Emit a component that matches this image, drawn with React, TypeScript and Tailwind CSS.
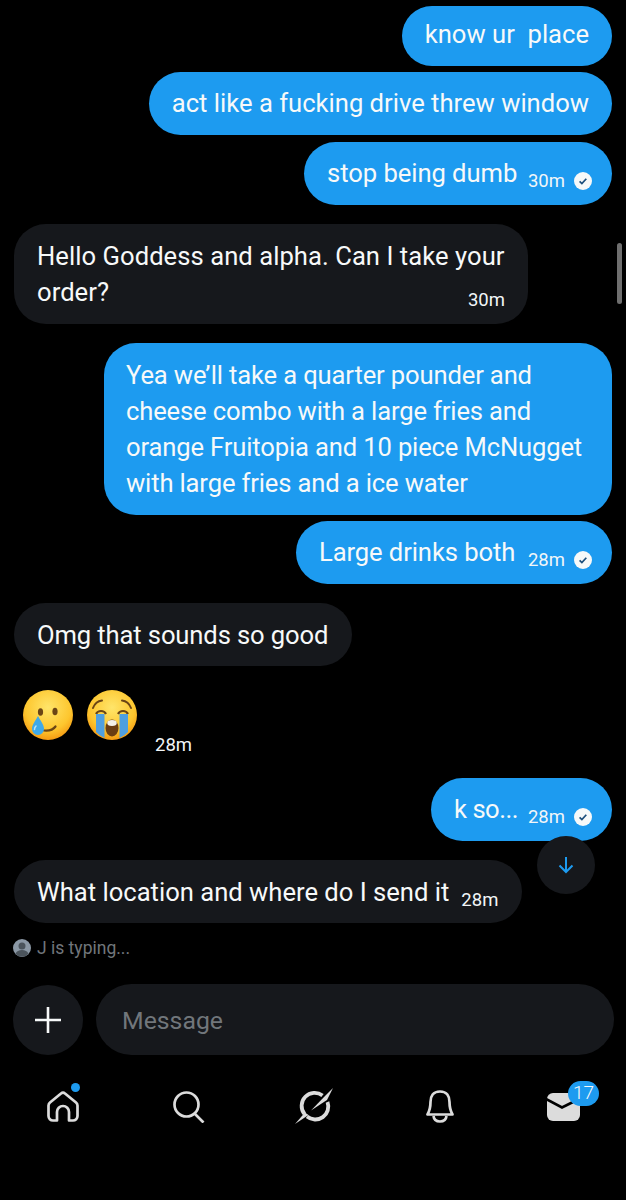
import { ReactNode } from 'react';

function Check() {
  return (
    <svg viewBox="0 0 18 18" className="ml-[9px] h-[18px] w-[18px] shrink-0">
      <circle cx="9" cy="9" r="9" fill="#f7f9f9" />
      <path d="M5.600 9.300l2.300 2.300 4.400-4.900" fill="none" stroke="#1d4f7c" strokeWidth="1.700" />
    </svg>
  );
}

function Meta({ time, check, className = '' }: { time: string; check?: boolean; className?: string }) {
  return (
    <span className={`ml-[10px] flex translate-y-[8px] items-center text-[18.5px] leading-[24px] tracking-normal text-[#f2f6f8] ${check ? '-mr-[3px]' : ''} ${className}`}>
      {time}
      {check && <Check />}
    </span>
  );
}

function Sent({ children, className }: { children: ReactNode; className: string }) {
  return (
    <div className={`self-end rounded-[32px] bg-[#1d9bf0] px-[23px] pb-[14px] pt-[13px] text-[25.6px] leading-[36px] text-[#f7f9f9] ${className}`}>
      {children}
    </div>
  );
}

function Received({ children, className }: { children: ReactNode; className: string }) {
  return (
    <div className={`self-start rounded-[32px] bg-[#16181c] px-[23px] pb-[13px] pt-[14px] text-[25.6px] leading-[36px] text-[#f7f9f9] ${className}`}>
      {children}
    </div>
  );
}

function SmileTear() {
  return (
    <svg viewBox="0 0 52 52" className="h-[52px] w-[52px]">
      <defs>
        <radialGradient id="face1" cx="50%" cy="35%" r="65%">
          <stop offset="0%" stopColor="#ffe56a" />
          <stop offset="70%" stopColor="#fdc62e" />
          <stop offset="100%" stopColor="#f59a12" />
        </radialGradient>
      </defs>
      <circle cx="26" cy="26" r="25" fill="url(#face1)" />
      <ellipse cx="18.500" cy="23" rx="2.600" ry="3.800" fill="#6b4515" />
      <ellipse cx="33" cy="22.500" rx="2.600" ry="3.800" fill="#6b4515" />
      <path d="M22 41.500c5 .5 9-.5 11.500-4" fill="none" stroke="#6b4515" strokeWidth="2.200" strokeLinecap="round" />
      <path d="M16 27c2.500 5 6 8.500 6 13a6 6 0 0 1-12 0c0-4.500 3.500-8 6-13z" fill="#3fa9e8" />
      <path d="M14 37c-1 1-1.500 2-1.500 3.500" fill="none" stroke="#b5e3fb" strokeWidth="1.500" strokeLinecap="round" />
    </svg>
  );
}

function LoudCry() {
  return (
    <svg viewBox="0 0 52 52" className="h-[52px] w-[52px]">
      <defs>
        <radialGradient id="face2" cx="50%" cy="35%" r="65%">
          <stop offset="0%" stopColor="#ffe56a" />
          <stop offset="70%" stopColor="#fdc62e" />
          <stop offset="100%" stopColor="#f59a12" />
        </radialGradient>
      </defs>
      <circle cx="26" cy="26" r="25" fill="url(#face2)" />
      <path d="M7 19c1.500-4 5-7 9-7.500" fill="none" stroke="#6b4515" strokeWidth="2" strokeLinecap="round" />
      <path d="M45 19c-1.500-4-5-7-9-7.500" fill="none" stroke="#6b4515" strokeWidth="2" strokeLinecap="round" />
      <path d="M10 25c2-4 8-4 10 0" fill="none" stroke="#6b4515" strokeWidth="2.200" />
      <path d="M32 25c2-4 8-4 10 0" fill="none" stroke="#6b4515" strokeWidth="2.200" />
      <path d="M10 25h8.500v24a25 25 0 0 1-8.500-6z" fill="#4f9fe0" />
      <path d="M33.500 25H42v18a25 25 0 0 1-8.500 6z" fill="#4f9fe0" />
      <ellipse cx="26" cy="39" rx="6.500" ry="8.500" fill="#6a3d12" />
      <ellipse cx="26" cy="34" rx="4.800" ry="3" fill="#f4f1e8" />
    </svg>
  );
}

function NavIcons() {
  return (
    <nav className="mt-[26px] flex items-start pl-[47px]">
      <div className="relative h-[41px] w-[33px]">
        <svg viewBox="0 0 32 31" className="absolute left-0 top-[10px] h-[31px] w-[32px]" fill="none" stroke="#dcdcdc" strokeWidth="2.700">
          <path d="M14 2.500a3 3 0 0 1 4 0L29 11.500a4 4 0 0 1 1.500 3V25a4.500 4.500 0 0 1-4.500 4.500H22V21a6 6 0 0 0-12 0v8.500H6A4.500 4.500 0 0 1 1.500 25V14.500a4 4 0 0 1 1.500-3z" strokeLinejoin="round" />
        </svg>
        <span className="absolute left-[24px] top-[2px] h-[9px] w-[9px] rounded-full bg-[#1d9bf0]" />
      </div>
      <svg viewBox="0 0 32 32" className="ml-[93px] mt-[10px] h-[32px] w-[32px]" fill="none" stroke="#dcdcdc" strokeWidth="2.700">
        <circle cx="13.500" cy="13.500" r="12" />
        <path d="M21.500 22.500l9 9" />
      </svg>
      <svg viewBox="0 0 39 38" className="ml-[90px] mt-[6px] h-[38px] w-[39px]" fill="#dcdcdc" stroke="none">
        <path d="M27.500 8.500A13 13 0 0 0 9.500 27" fill="none" stroke="#dcdcdc" strokeWidth="3.800" />
        <path d="M12 29.500A13 13 0 0 0 32.500 15" fill="none" stroke="#dcdcdc" strokeWidth="3.800" />
        <polygon points="38,1 32,13 16,23.500 30,9" />
        <polygon points="0,37 10,25.500 13.500,28" />
      </svg>
      <svg viewBox="0 0 28 33" className="ml-[92px] mt-[9px] h-[33px] w-[28px]" fill="none" stroke="#dcdcdc" strokeWidth="2.700">
        <path d="M14 1.500C7 1.500 4.500 6 4.500 12c0 6-1 9-3 12.500h25c-2-3.500-3-6.500-3-12.500 0-6-2.500-10.500-9.500-10.500z" strokeLinejoin="round" />
        <path d="M7.500 26c.5 4 3.500 5.500 6.500 5.500s6-1.500 6.500-5.500" />
      </svg>
      <div className="relative ml-[93px] h-[41px] w-[53px]">
        <svg viewBox="0 0 33 28" className="absolute left-0 top-[12px] h-[28px] w-[33px]">
          <rect width="33" height="28" rx="6" fill="#dcdcdc" />
          <path d="M-1 6l16 8.500L26 9" fill="none" stroke="#000" strokeWidth="2.600" />
        </svg>
        <span className="absolute left-[21px] top-0 flex h-[25px] w-[31px] items-center justify-center rounded-full bg-[#1d9bf0] text-[19px] font-light text-[#f7f9f9]">
          17
        </span>
      </div>
    </nav>
  );
}

export default function App() {
  return (
    <div className="relative flex h-[1200px] w-[626px] flex-col overflow-hidden bg-black pt-[6px] font-['Roboto',sans-serif]">
      {/* scrollbar thumb */}
      <div className="absolute right-[4px] top-[243px] h-[61px] w-[5px] rounded-full bg-[#6f6f6f]" />

      {/* messages */}
      <div className="flex flex-col px-[14px]">
        <Sent className="!pb-[14px] !pt-[10px]">know ur&nbsp; place</Sent>
        <Sent className="mt-[6px]">act like a fucking drive threw window</Sent>
        <Sent className="mt-[7px] flex w-[308px] items-center justify-between whitespace-nowrap tracking-[-0.05px]">
          stop being dumb
          <Meta time="30m" check />
        </Sent>

        <Received className="mt-[19px] w-[514px] !pb-[14px] tracking-[0.05px]">
          Hello Goddess and alpha. Can I take your
          <div className="flex items-center justify-between">
            order?
            <Meta time="30m" />
          </div>
        </Received>

        <Sent className="mt-[19px] w-[508px] !pl-[22px] !pt-[14px] tracking-[-0.15px]">
          Yea we’ll take a quarter pounder and cheese combo with a large fries and orange Fruitopia and 10 piece McNugget with large fries and a ice water
        </Sent>
        <Sent className="mt-[6px] flex w-[316px] items-center justify-between whitespace-nowrap tracking-[-0.1px]">
          Large drinks both
          <Meta time="28m" check />
        </Sent>

        <Received className="mt-[19px] w-[338px] tracking-[-0.12px]">Omg that sounds so good</Received>

        <div className="ml-[8px] mt-[23px] flex items-start gap-[12px]">
          <SmileTear />
          <LoudCry />
          <span className="ml-[5px] mt-[44px] text-[18.5px] leading-[24px] text-[#f2f6f8]">28m</span>
        </div>

        <Sent className="mt-[21px] flex items-center">
          <span className="tracking-[-0.5px]">k so...</span>
          <Meta time="28m" check />
        </Sent>

        <Received className="mt-[19px] flex w-[508px] items-center">
          What location and where do I send it
          <Meta time="28m" className="ml-[12px]" />
        </Received>
      </div>

      {/* scroll to bottom */}
      <div className="absolute left-[537px] top-[836px] flex h-[58px] w-[58px] items-center justify-center rounded-full bg-[#16181c]">
        <svg viewBox="0 0 20 20" className="h-[20px] w-[20px]" fill="none" stroke="#1d9bf0" strokeWidth="2">
          <path d="M10 2v15M3.500 10.500L10 17l6.500-6.500" />
        </svg>
      </div>

      {/* typing */}
      <div className="ml-[13px] mt-[13px] flex items-center gap-[6px] text-[17.5px] leading-[24px] text-[#71767b]">
        <svg viewBox="0 0 18 18" className="h-[18px] w-[18px]">
          <circle cx="9" cy="9" r="9" fill="#8b98a5" />
          <circle cx="9" cy="7" r="3.500" fill="#4b545c" />
          <path d="M2.500 15c1-3 3.500-4 6.500-4s5.500 1 6.500 4A9 9 0 0 1 2.500 15z" fill="#4b545c" />
        </svg>
        J is typing...
      </div>

      {/* composer */}
      <div className="ml-[13px] mr-[12px] mt-[24px] flex items-center gap-[13px]">
        <div className="flex h-[70px] w-[70px] shrink-0 items-center justify-center rounded-full bg-[#16181c]">
          <svg viewBox="0 0 26 26" className="h-[26px] w-[26px]" stroke="#f7f9f9" strokeWidth="2.600">
            <path d="M13 0v26M0 13h26" />
          </svg>
        </div>
        <div className="flex h-[71px] flex-1 items-center rounded-full bg-[#16181c] pl-[26px] pt-[2px] text-[24.8px] text-[#71767b]">
          Message
        </div>
      </div>

      <NavIcons />
    </div>
  );
}
